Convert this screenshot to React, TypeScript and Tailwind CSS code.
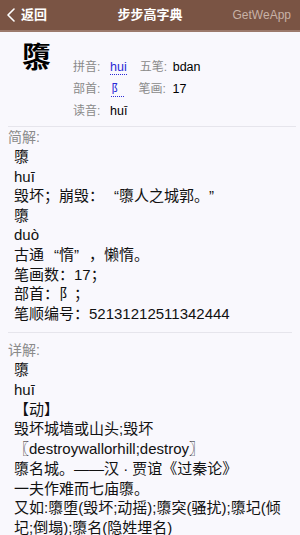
const CJK = '"Liberation Sans", "Noto Sans CJK SC", sans-serif';

const BackIcon = () => (
  <svg width="8" height="14" viewBox="0 0 8 14" fill="none" stroke="currentColor" strokeWidth="1.6" strokeLinecap="round" strokeLinejoin="round">
    <path d="M7 1L1 7l6 6" />
  </svg>
);

const InfoRow = ({ children }: { children: React.ReactNode }) => (
  <div className="flex items-center h-[22px] text-[12.5px]">{children}</div>
);

const Label = ({ text, w }: { text: string; w: string }) => (
  <span className={`text-[#8a8a8a] text-[12px] shrink-0 ${w}`}>{text}</span>
);

const LinkVal = ({ text }: { text: string }) => (
  <span className="text-[#2a2ad6] border-b border-dotted border-[#2a2ad6] leading-[14px]">{text}</span>
);

// full-width quote marks
const Open = () => <span className="inline-block w-[15px] text-right">“</span>;
const Close = () => <span className="inline-block w-[15px] text-left">”</span>;

const xiangjie = [
  '隳',
  'huī',
  '【动】',
  '毁坏城墙或山头;毁坏',
  '〖destroywallorhill;destroy〗',
  '隳名城。——汉 · 贾谊《过秦论》',
  '一夫作难而七庙隳。',
  '又如:隳堕(毁坏;动摇);隳突(骚扰);隳圮(倾圮;倒塌);隳名(隐姓埋名)',
];

export default function App() {
  return (
    <div className="w-[300px] h-[535px] overflow-hidden bg-[#f9f8fd]" style={{ fontFamily: CJK }}>
      <div className="h-[32px] bg-[#7a5444] border-b-2 border-[#9c7a6c] flex items-center px-[7px] text-white">
        <div className="flex items-center gap-[6px] w-[80px]">
          <BackIcon />
          <span className="text-[13px] font-bold">返回</span>
        </div>
        <div className="flex-1 text-center text-[13px] font-bold">步步高字典</div>
        <div className="w-[80px] text-right text-[12px] text-[#c7b1a6] pr-[2px]">GetWeApp</div>
      </div>

      <div className="flex pl-[14px] ml-2 mr-1 border-b border-[#e6e5ec] h-[95px]">
        <div className="text-[29px] leading-[32px] pt-[10px] font-bold text-black w-[51px]">隳</div>
        <div className="pt-[24px] flex flex-col">
          <InfoRow>
            <Label text="拼音:" w="w-[37px]" />
            <LinkVal text="hui" />
            <span className="w-[13px]" />
            <Label text="五笔:" w="w-[33px]" />
            <span className="text-black">bdan</span>
          </InfoRow>
          <InfoRow>
            <Label text="部首:" w="w-[38px]" />
            <LinkVal text="阝" />
            <span className="w-[15px]" />
            <Label text="笔画:" w="w-[34px]" />
            <span className="text-black">17</span>
          </InfoRow>
          <InfoRow>
            <Label text="读音:" w="w-[37px]" />
            <span className="text-black">huī</span>
          </InfoRow>
        </div>
      </div>

      <div className="mx-2 border-b border-[#e6e5ec] pb-[9px]">
        <div className="text-[14px] text-[#8a8a8a] leading-[20px]">简解:</div>
        <div className="pl-[6px] pr-1 text-[15px] leading-[19.6px] text-[#111]">
          <div>隳</div>
          <div>huī</div>
          <div>
            毁坏；崩毁：<Open />隳人之城郭。<Close />
          </div>
          <div>隳</div>
          <div>duò</div>
          <div>
            古通<Open />惰<Close />，懒惰。
          </div>
          <div>笔画数：17；</div>
          <div>部首：阝；</div>
          <div>笔顺编号：52131212511342444</div>
        </div>
      </div>

      <div className="mx-2 pt-[7px]">
        <div className="text-[14px] text-[#8a8a8a] leading-[20px]">详解:</div>
        <div className="pl-[6px] text-[15px] leading-[19.7px] text-[#111]">
          {xiangjie.map((t, i) => (
            <div key={i}>{t}</div>
          ))}
        </div>
      </div>
    </div>
  );
}
